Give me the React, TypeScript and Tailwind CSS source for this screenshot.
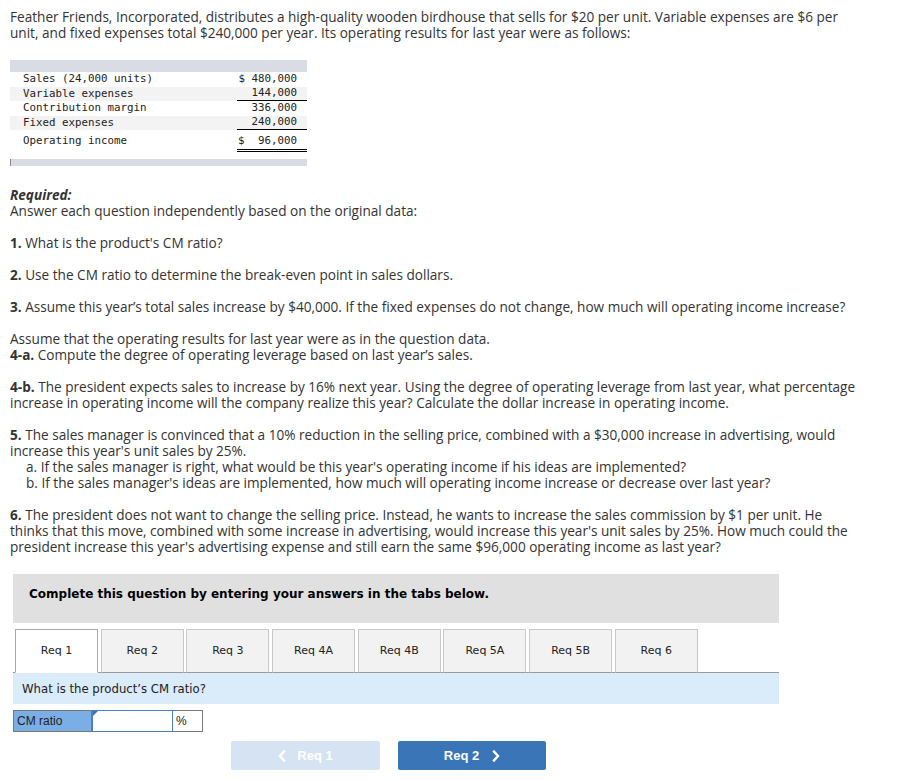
import React from "react";

const body = { fontFamily: '"Open Sans", "Liberation Sans", sans-serif' };
const mono = { fontFamily: '"DejaVu Sans Mono", "Liberation Mono", monospace' };
const verdana = { fontFamily: '"DejaVu Sans", Verdana, sans-serif' };
const arial = { fontFamily: '"Liberation Sans", Arial, sans-serif' };

const rows = [
  { label: "Sales (24,000 units)", value: "$ 480,000", bg: "bg-white", line: "" },
  { label: "Variable expenses", value: "144,000", bg: "bg-[#f3f3f3]", line: "border-b border-black" },
  { label: "Contribution margin", value: "336,000", bg: "bg-white", line: "" },
  { label: "Fixed expenses", value: "240,000", bg: "bg-[#f3f3f3]", line: "border-b border-black" },
];

const tabs = ["Req 1", "Req 2", "Req 3", "Req 4A", "Req 4B", "Req 5A", "Req 5B", "Req 6"];

const Chevron = ({ left }: { left?: boolean }) => (
  <svg width="8" height="12" viewBox="0 0 8 12" fill="none">
    <path
      d={left ? "M6 1.5L2 6l4 4.5" : "M2 1.5L6 6l-4 4.5"}
      stroke="white"
      strokeWidth="2.4"
      strokeLinecap="square"
    />
  </svg>
);

const IncomeTable = () => (
  <div className="w-[297px] mt-[19px] text-[10.8px] text-[#222]" style={mono}>
    <div className="h-[12px] bg-[#d9dce5]" />
    {rows.map((r) => (
      <div key={r.label} className={`flex h-[14.5px] items-center ${r.bg}`}>
        <div className="flex-1 pl-[13px] leading-[14px]">{r.label}</div>
        <div className={`w-[70px] h-full flex items-center justify-end pr-[10px] whitespace-pre ${r.line}`}>
          {r.value}
        </div>
      </div>
    ))}
    <div className="flex h-[22px] bg-white">
      <div className="flex-1 pl-[13px] pt-[4px] leading-[14px]">Operating income</div>
      <div className="w-[70px] h-full border-b-[3px] border-double border-black flex justify-between pt-[4px] pr-[10px] pl-[1px] leading-[14px]">
        <span>$</span>
        <span>96,000</span>
      </div>
    </div>
    <div className="h-[7px]" />
    <div className="h-[7px] bg-[#d9dce5] border-l border-[#888]" />
  </div>
);

export default function App() {
  return (
    <div className="w-[912px] min-h-[781px] bg-white pl-[10px] pt-[9px] text-[13.6px] leading-4 text-[#333]" style={body}>
      <p>
        Feather Friends, Incorporated, distributes a high-quality wooden birdhouse that sells for $20 per unit. Variable expenses are $6 per
        <br />
        unit, and fixed expenses total $240,000 per year. Its operating results for last year were as follows:
      </p>

      <IncomeTable />

      <div className="mt-[21px]">
        <p className="font-bold italic">Required:</p>
        <p>Answer each question independently based on the original data:</p>
      </div>

      <p className="mt-4">
        <b>1.</b> What is the product's CM ratio?
      </p>
      <p className="mt-4">
        <b>2.</b> Use the CM ratio to determine the break-even point in sales dollars.
      </p>
      <p className="mt-4">
        <b>3.</b> Assume this year’s total sales increase by $40,000. If the fixed expenses do not change, how much will operating income increase?
      </p>
      <p className="mt-4">
        Assume that the operating results for last year were as in the question data.
        <br />
        <b>4-a.</b> Compute the degree of operating leverage based on last year’s sales.
      </p>
      <p className="mt-4">
        <b>4-b.</b> The president expects sales to increase by 16% next year. Using the degree of operating leverage from last year, what percentage
        <br />
        increase in operating income will the company realize this year? Calculate the dollar increase in operating income.
      </p>
      <div className="mt-4">
        <p>
          <b>5.</b> The sales manager is convinced that a 10% reduction in the selling price, combined with a $30,000 increase in advertising, would
          <br />
          increase this year's unit sales by 25%.
        </p>
        <p className="pl-4">a. If the sales manager is right, what would be this year's operating income if his ideas are implemented?</p>
        <p className="pl-4">b. If the sales manager's ideas are implemented, how much will operating income increase or decrease over last year?</p>
      </div>
      <p className="mt-4">
        <b>6.</b> The president does not want to change the selling price. Instead, he wants to increase the sales commission by $1 per unit. He
        <br />
        thinks that this move, combined with some increase in advertising, would increase this year's unit sales by 25%. How much could the
        <br />
        president increase this year's advertising expense and still earn the same $96,000 operating income as last year?
      </p>

      <div className="ml-[3px] w-[766px] mt-[19px] pb-3">
        <div className="h-[49px] bg-[#e0e0e0] pl-4 pt-[12px] text-[12px] font-bold text-black" style={verdana}>
          Complete this question by entering your answers in the tabs below.
        </div>

        <div className="mt-[6px] flex gap-[2.7px] pl-[2px] border-b border-[#9a9a9a]" style={verdana}>
          {tabs.map((t, i) => (
            <div
              key={t}
              className={`w-[83px] h-[44px] -mb-px flex items-center justify-center text-[11px] text-[#222] border ${
                i === 0 ? "bg-white border-[#a8a8a8] border-b-white" : "bg-[#f2f2f2] border-[#c8c8c8] border-b-[#9a9a9a]"
              }`}
            >
              {t}
            </div>
          ))}
        </div>

        <div className="h-[31px] bg-[#daebf9] flex items-center pl-[9px] text-[11.7px] text-[#222]" style={verdana}>
          What is the product’s CM ratio?
        </div>

        <div className="mt-[6px] flex h-[22px] text-[12px] text-[#222]" style={arial}>
          <div className="w-[79px] bg-[#7aaee5] border border-[#777] flex items-center pl-[3px]">CM ratio</div>
          <div className="relative w-[81px] bg-white border border-[#4a7fc0]">
            <div className="absolute left-0 top-0 w-0 h-0 border-t-[5px] border-r-[5px] border-t-[#3a75b5] border-r-transparent" />
          </div>
          <div className="w-[30px] border border-l-0 border-[#777] flex items-center pl-[3px]">%</div>
        </div>

        <div className="mt-[9px] flex gap-[18px] ml-[218px] text-[13px] font-bold text-white" style={arial}>
          <div className="w-[149px] h-[29px] rounded-[2px] bg-[#d6e3f2] flex items-center justify-center gap-[11px]">
            <Chevron left />
            <span>Req 1</span>
          </div>
          <div className="w-[148px] h-[29px] rounded-[2px] bg-[#3a75b7] flex items-center justify-center gap-[13px]">
            <span>Req 2</span>
            <Chevron />
          </div>
        </div>
      </div>
    </div>
  );
}
